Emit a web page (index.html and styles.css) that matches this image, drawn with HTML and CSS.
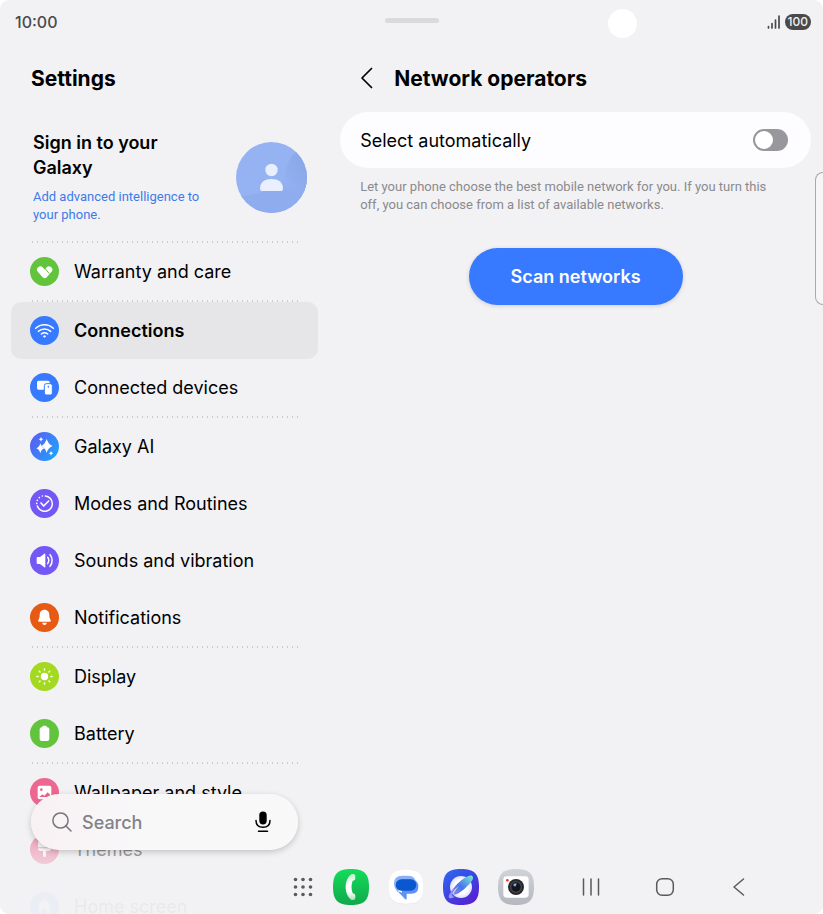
FILE: index.html
```html
<!DOCTYPE html>
<html lang="en">
<head>
    <meta charset="UTF-8">
    <meta name="viewport" content="width=device-width, initial-scale=1.0">
    <title>Settings - Network operators</title>
    <link rel="stylesheet" href="styles.css">
</head>
<body>

<div class="screen">

    <!-- Status bar -->
    <header class="status-bar">
        <span class="clock">10:00</span>
        <div class="status-icons">
            <svg class="signal" viewBox="0 0 14 14" aria-hidden="true">
                <path d="M1.5 11.5v1.500M5 8.500v4.500M8.500 5v8M12 1v12" stroke="#4a4a4c" stroke-width="1.700" stroke-linecap="round"/>
            </svg>
            <span class="battery-level">100</span>
        </div>
    </header>
    <div class="drag-handle"></div>
    <div class="camera-hole"></div>
    <div class="edge-panel"></div>

    <div class="panes">

        <!-- Left pane: settings list -->
        <nav class="sidebar">
            <h1 class="title">Settings</h1>

            <a class="account" href="#account">
                <span class="account-text">
                    <span class="account-title">Sign in to your Galaxy</span>
                    <span class="account-sub">Add advanced intelligence to your phone.</span>
                </span>
                <svg class="avatar" viewBox="0 0 71 71" aria-hidden="true">
                    <defs>
                        <clipPath id="avatarClip"><circle cx="35.5" cy="35.5" r="35.5"/></clipPath>
                        <linearGradient id="avatarShade" x1="0" y1="0" x2="0" y2="1">
                            <stop offset="0" stop-color="#95b2f2"/>
                            <stop offset="0.400" stop-color="#8eacee"/>
                            <stop offset="1" stop-color="#8eacee"/>
                        </linearGradient>
                        <linearGradient id="avatarEdge" x1="1" y1="0" x2="0" y2="1">
                            <stop offset="0" stop-color="#87a4e6"/>
                            <stop offset="1" stop-color="#95b2f2"/>
                        </linearGradient>
                    </defs>
                    <g clip-path="url(#avatarClip)">
                        <rect width="71" height="71" fill="#95b2f2"/>
                        <path d="M0 54Q28 54 48 38H71V71H0z" fill="url(#avatarShade)"/>
                        <path d="M48 38Q50 18 60 10L71 20V50z" fill="url(#avatarEdge)"/>
                    </g>
                    <circle cx="35.500" cy="28" r="6.200" fill="#e9effc"/>
                    <path d="M24 46.500C24 40 29 37 35.500 37S47 40 47 46.500Q47 49 45 49H26Q24 49 24 46.500z" fill="#e9effc"/>
                </svg>
            </a>

            <ul class="menu">
                <li class="group">
                    <a class="item" href="#warranty">
                        <svg class="icon" viewBox="0 0 87 87">
                            <circle cx="43.500" cy="43.500" r="43.500" fill="#62c33c"/>
                            <path d="M31 38L44 53L57 38" fill="none" stroke="#fff" stroke-width="20" stroke-linecap="round" stroke-linejoin="round"/>
                            <path d="M43 32L58 50" stroke="#62c33c" stroke-width="3"/>
                        </svg>
                        <span>Warranty and care</span>
                    </a>
                </li>
                <li class="group">
                    <a class="item active" href="#connections">
                        <svg class="icon" viewBox="0 0 87 87">
                            <circle cx="43.500" cy="43.500" r="43.500" fill="#387aff"/>
                            <path d="M17 37A38 38 0 0 1 70 37M25 46A28 28 0 0 1 62 46M34 54A15 15 0 0 1 53 54" fill="none" stroke="#fff" stroke-width="4.500" stroke-linecap="round"/>
                            <circle cx="43.500" cy="61" r="3.500" fill="#fff"/>
                        </svg>
                        <span>Connections</span>
                    </a>
                    <a class="item" href="#devices">
                        <svg class="icon" viewBox="0 0 87 87">
                            <circle cx="43.500" cy="43.500" r="43.500" fill="#387aff"/>
                            <rect x="21" y="23" width="38" height="27" rx="5" fill="#fff"/>
                            <rect x="43" y="32" width="24" height="34" rx="6" fill="#fff" stroke="#387aff" stroke-width="3"/>
                            <rect x="53" y="38" width="4" height="6" rx="2" fill="#387aff"/>
                        </svg>
                        <span>Connected devices</span>
                    </a>
                </li>
                <li class="group">
                    <a class="item" href="#galaxy-ai">
                        <svg class="icon" viewBox="0 0 87 87">
                            <defs>
                                <linearGradient id="aiFill" x1="0" y1="0.200" x2="1" y2="0.800">
                                    <stop offset="0" stop-color="#5c5cf5"/>
                                    <stop offset="1" stop-color="#1da4fb"/>
                                </linearGradient>
                            </defs>
                            <circle cx="43.500" cy="43.500" r="43.500" fill="url(#aiFill)"/>
                            <g fill="#fff">
                                <path d="M31 34Q34 46 43 49Q34 52 31 64Q28 52 19 49Q28 46 31 34z"/>
                                <path d="M50 21Q55 37 68 42Q55 47 50 62Q45 47 33 42Q45 37 50 21z"/>
                                <path d="M33 15Q34 21 40 22Q34 23 33 29Q32 23 26 22Q32 21 33 15z"/>
                                <path d="M63 57Q64 63 70 64Q64 65 63 71Q62 65 56 64Q62 63 63 57z"/>
                            </g>
                        </svg>
                        <span>Galaxy AI</span>
                    </a>
                    <a class="item" href="#modes">
                        <svg class="icon" viewBox="0 0 87 87">
                            <circle cx="43.500" cy="43.500" r="43.500" fill="#7358f5"/>
                            <g fill="none" stroke="#fff" stroke-width="4.500" stroke-linecap="round" stroke-linejoin="round">
                                <path d="M46 21A23 23 0 1 1 22 51"/>
                                <path d="M20 43v0.100M22 34v0.100M28 26v0.100M37 21v0.100" stroke-width="5"/>
                                <path d="M33 42L41 51L56 36" stroke-width="5"/>
                            </g>
                        </svg>
                        <span>Modes and Routines</span>
                    </a>
                    <a class="item" href="#sounds">
                        <svg class="icon" viewBox="0 0 87 87">
                            <circle cx="43.500" cy="43.500" r="43.500" fill="#7358f5"/>
                            <path d="M20 36Q20 33 23 33H30L43 23Q46 21 46 25V62Q46 66 43 64L30 54H23Q20 54 20 51z" fill="#fff"/>
                            <path d="M53 34Q60 43 53 53M60 26Q73 43 60 61" fill="none" stroke="#fff" stroke-width="4.500" stroke-linecap="round"/>
                        </svg>
                        <span>Sounds and vibration</span>
                    </a>
                    <a class="item" href="#notifications">
                        <svg class="icon" viewBox="0 0 87 87">
                            <circle cx="43.500" cy="43.500" r="43.500" fill="#e65a14"/>
                            <path d="M43.500 20C53 20 58 27 58 36C58 44 59 46 62 51Q64 56 60 56H27Q23 56 25 51C28 46 29 44 29 36C29 27 34 20 43.500 20zM36 59H51Q49 66 43.500 66T36 59z" fill="#fff"/>
                        </svg>
                        <span>Notifications</span>
                    </a>
                </li>
                <li class="group">
                    <a class="item" href="#display">
                        <svg class="icon" viewBox="0 0 87 87">
                            <circle cx="43.500" cy="43.500" r="43.500" fill="#a3d921"/>
                            <circle cx="43.500" cy="43.500" r="11" fill="#fff"/>
                            <path d="M43.500 21v3M43.500 63v3M21 43.500h3M63 43.500h3M28 28l2 2M57 57l2 2M28 59l2-2M57 30l2-2" stroke="#fff" stroke-width="4.500" stroke-linecap="round"/>
                        </svg>
                        <span>Display</span>
                    </a>
                    <a class="item" href="#battery">
                        <svg class="icon" viewBox="0 0 87 87">
                            <circle cx="43.500" cy="43.500" r="43.500" fill="#62c33c"/>
                            <rect x="37" y="20" width="13" height="10" rx="3" fill="#fff"/>
                            <rect x="29" y="25" width="29" height="41" rx="6" fill="#fff"/>
                        </svg>
                        <span>Battery</span>
                    </a>
                </li>
                <li class="group">
                    <a class="item" href="#wallpaper">
                        <svg class="icon" viewBox="0 0 87 87">
                            <circle cx="43.500" cy="43.500" r="43.500" fill="#ed6790"/>
                            <rect x="23" y="23" width="41" height="41" rx="6" fill="#fff"/>
                            <circle cx="34" cy="35" r="4" fill="#ed6790"/>
                            <path d="M28 57L37 49L43 53L53 43L60 50V57z" fill="#ed6790"/>
                        </svg>
                        <span>Wallpaper and style</span>
                    </a>
                    <a class="item" href="#themes">
                        <svg class="icon" viewBox="0 0 87 87">
                            <circle cx="43.500" cy="43.500" r="43.500" fill="#ed6790"/>
                            <path d="M24 20H63V37H24zM24 40H63Q63 48 55 48H48V62Q48 66 43.500 66T39 62V48H32Q24 48 24 40z" fill="#fff"/>
                        </svg>
                        <span>Themes</span>
                    </a>
                    <a class="item" href="#home-screen">
                        <svg class="icon" viewBox="0 0 87 87">
                            <circle cx="43.500" cy="43.500" r="43.500" fill="#387aff"/>
                            <path d="M43.500 20L66 42H60V64H49V51H38V64H27V42H21z" fill="#fff"/>
                        </svg>
                        <span>Home screen</span>
                    </a>
                </li>
            </ul>
        </nav>

        <!-- Right pane: network operators -->
        <main class="content">
            <div class="content-header">
                <button class="back-button" type="button" aria-label="Back">
                    <svg viewBox="0 0 14 22" aria-hidden="true">
                        <path d="M11.500 1.500L2 11L11.500 20.500" fill="none" stroke="#000" stroke-width="1.700" stroke-linecap="round" stroke-linejoin="round"/>
                    </svg>
                </button>
                <h2 class="title">Network operators</h2>
            </div>

            <div class="card">
                <label for="autoSelect">Select automatically</label>
                <input type="checkbox" id="autoSelect" class="switch" role="switch">
            </div>
            <p class="hint">Let your phone choose the best mobile network for you. If you turn this off, you can choose from a list of available networks.</p>

            <button class="scan-button" type="button">Scan networks</button>
        </main>
    </div>

    <div class="bottom-fade"></div>

    <!-- Floating search -->
    <form class="search" role="search">
        <svg class="search-icon" viewBox="0 0 20 20" aria-hidden="true">
            <path d="M14 14L19 19" stroke="#77777b" stroke-width="1.500" stroke-linecap="round"/>
            <circle cx="8.500" cy="8.500" r="7.600" fill="none" stroke="#77777b" stroke-width="1.500"/>
        </svg>
        <input type="search" class="search-input" placeholder="Search" aria-label="Search">
        <button class="mic-button" type="button" aria-label="Voice search">
            <svg viewBox="0 0 16 22" aria-hidden="true">
                <rect x="4.300" y="0.500" width="7.400" height="13" rx="3.700"/>
                <path d="M1 9.500C1 14 4 16.300 8 16.300S15 14 15 9.500M3.500 20.300h9" fill="none" stroke="#000" stroke-width="1.500" stroke-linecap="round"/>
            </svg>
        </button>
    </form>

    <!-- Taskbar -->
    <footer class="taskbar">
        <button class="nav-button" type="button" aria-label="All apps">
            <svg viewBox="0 0 20 20" fill="#5a5a5c">
                <circle cx="2.500" cy="2.500" r="1.800"/><circle cx="10" cy="2.500" r="1.800"/><circle cx="17.500" cy="2.500" r="1.800"/>
                <circle cx="2.500" cy="10" r="1.800"/><circle cx="10" cy="10" r="1.800"/><circle cx="17.500" cy="10" r="1.800"/>
                <circle cx="2.500" cy="17.500" r="1.800"/><circle cx="10" cy="17.500" r="1.800"/><circle cx="17.500" cy="17.500" r="1.800"/>
            </svg>
        </button>

        <div class="apps">
            <button class="app" type="button" aria-label="Phone">
                <svg viewBox="0 0 108 108">
                    <defs>
                        <linearGradient id="phoneBg" x1="0" y1="0" x2="0" y2="1">
                            <stop offset="0" stop-color="#14dc5a"/>
                            <stop offset="1" stop-color="#10a94c"/>
                        </linearGradient>
                        <linearGradient id="phoneFg" x1="0" y1="0" x2="0" y2="1">
                            <stop offset="0" stop-color="#b5f2c6"/>
                            <stop offset="0.350" stop-color="#fff"/>
                            <stop offset="0.700" stop-color="#fff"/>
                            <stop offset="1" stop-color="#a5e2b8"/>
                        </linearGradient>
                    </defs>
                    <path d="M54 0C94 0 108 14 108 54S94 108 54 108S0 94 0 54S14 0 54 0z" fill="url(#phoneBg)"/>
                    <path d="M56 15H62Q67 16 67 22V28Q67 35 59 35Q52 54 59 73Q67 74 67 80V87Q67 92 61 93H56C32 78 32 30 56 15z" fill="url(#phoneFg)"/>
                </svg>
            </button>
            <button class="app" type="button" aria-label="Messages">
                <svg viewBox="0 0 108 108">
                    <path d="M54 3C92 3 106 16 106 54S92 106 54 106S2 92 2 54S16 3 54 3z" fill="#e2e2e5"/>
                    <path d="M54 2C92 2 106 15 106 53S92 104 54 104S2 91 2 53S16 2 54 2z" fill="#fff"/>
                    <path d="M42 20H60Q79 20 83 36H40L30 70Q18 58 18 43Q18 20 42 20z" fill="#8ab0f8"/>
                    <path d="M42 31H70Q91 33 91 53Q91 74 70 74H56V88Q56 94 51 90L28 66Q38 71 42 70z" fill="#5f92f5"/>
                    <rect x="23" y="31" width="62" height="34" rx="17" fill="#0a57d0"/>
                </svg>
            </button>
            <button class="app" type="button" aria-label="Internet">
                <svg viewBox="0 0 108 108">
                    <defs>
                        <linearGradient id="webBg" x1="0" y1="0" x2="0.800" y2="1">
                            <stop offset="0" stop-color="#2f6af2"/>
                            <stop offset="0.500" stop-color="#3b46e4"/>
                            <stop offset="1" stop-color="#5a1fd2"/>
                        </linearGradient>
                        <linearGradient id="orbit" x1="0" y1="1" x2="1" y2="0">
                            <stop offset="0" stop-color="#b59af5"/>
                            <stop offset="0.500" stop-color="#4573ee"/>
                            <stop offset="1" stop-color="#78f0d0"/>
                        </linearGradient>
                        <radialGradient id="globe">
                            <stop offset="0.600" stop-color="#fff"/>
                            <stop offset="1" stop-color="#dcdffc"/>
                        </radialGradient>
                    </defs>
                    <path d="M54 0C94 0 108 14 108 54S94 108 54 108S0 94 0 54S14 0 54 0z" fill="url(#webBg)"/>
                    <circle cx="54" cy="54" r="33" fill="url(#globe)"/>
                    <path d="M24 88C6 88 30 58 45 43S88 10 90 26C91 35 72 53 59 64S34 79 32 77C28 75 40 59 50 49C36 60 25 74 29 81Q31 85 38 82Q30 88 24 88z" fill="url(#orbit)"/>
                </svg>
            </button>
            <button class="app" type="button" aria-label="Camera">
                <svg viewBox="0 0 108 108">
                    <defs>
                        <linearGradient id="camBg" x1="0" y1="0" x2="0" y2="1">
                            <stop offset="0" stop-color="#d0d3d8"/>
                            <stop offset="1" stop-color="#b5b8be"/>
                        </linearGradient>
                    </defs>
                    <path d="M54 0C94 0 108 14 108 54S94 108 54 108S0 94 0 54S14 0 54 0z" fill="url(#camBg)"/>
                    <rect x="16" y="22" width="76" height="64" rx="10" fill="#fff"/>
                    <circle cx="28" cy="34" r="4" fill="#e33b2e"/>
                    <circle cx="54" cy="54" r="24" fill="#26272b"/>
                    <circle cx="54" cy="54" r="18" fill="#44464c"/>
                    <circle cx="54" cy="54" r="14" fill="#15161c"/>
                    <path d="M44 49Q48 41 57 43L52 54z" fill="#4170b8"/>
                    <circle cx="51" cy="47" r="3" fill="#a9cbf5"/>
                </svg>
            </button>
        </div>

        <div class="nav-buttons">
            <button class="nav-button" type="button" aria-label="Recents">
                <svg viewBox="0 0 20 20"><path d="M2.500 2v16M10 2v16M17.500 2v16" stroke="#5a5a5c" stroke-width="1.500" stroke-linecap="round"/></svg>
            </button>
            <button class="nav-button" type="button" aria-label="Home">
                <svg viewBox="0 0 20 20"><rect x="1.700" y="1.700" width="16.600" height="16.600" rx="5.500" fill="none" stroke="#5a5a5c" stroke-width="1.500"/></svg>
            </button>
            <button class="nav-button" type="button" aria-label="Back">
                <svg viewBox="0 0 20 20"><path d="M14.500 2L5 10L14.500 18" fill="none" stroke="#5a5a5c" stroke-width="1.500" stroke-linecap="round" stroke-linejoin="round"/></svg>
            </button>
        </div>
    </footer>
</div>

</body>
</html>
```
FILE: styles.css
```css
* {
    box-sizing: border-box;
}

body {
    margin: 0;
    background-color: #fff;
    color: #000;
    font-family: Inter, Roboto, sans-serif;
    font-size: 18px;
}

button {
    border: none;
    padding: 0;
    background: none;
    font-family: inherit;
    cursor: pointer;
}

svg {
    display: block;
}

.screen {
    position: relative;
    display: flex;
    flex-direction: column;
    height: 100vh;
    overflow: hidden;
    background-color: #f2f2f4;
    border-radius: 9px;
}

/* Status bar */
.status-bar {
    display: flex;
    justify-content: space-between;
    align-items: center;
    flex: none;
    height: 44px;
    padding: 0 12px 0 15px;
    color: #4a4a4c;
}

.clock {
    font-size: 16px;
    font-weight: 500;
}

.status-icons {
    display: flex;
    align-items: center;
    gap: 4px;
}

.signal {
    width: 14px;
    height: 14px;
}

.battery-level {
    padding: 0 3px;
    border-radius: 8px;
    background-color: #4a4a4c;
    color: #f2f2f4;
    font-size: 12px;
    font-weight: 500;
    line-height: 16px;
}

.drag-handle {
    position: absolute;
    top: 18px;
    left: 50%;
    width: 54px;
    height: 5px;
    margin-left: -27px;
    border-radius: 3px;
    background-color: #dadadc;
}

.camera-hole {
    position: absolute;
    top: 9px;
    right: 186px;
    width: 29px;
    height: 29px;
    border-radius: 50%;
    background-color: #fff;
}

.edge-panel {
    position: absolute;
    top: 172px;
    right: 0;
    width: 8px;
    height: 133px;
    border: 1px solid #a9a9ab;
    border-right: none;
    border-radius: 8px 0 0 8px;
    background-color: #f6f6f8;
}

.panes {
    display: grid;
    grid-template-columns: 2fr 3fr;
    flex: 1;
    min-height: 0;
}

.title {
    margin: 0;
    padding-top: 2px;
    font-size: 21px;
    font-weight: 700;
    line-height: 66px;
}

/* Left pane */
.sidebar {
    overflow: hidden;
    padding: 0 11px;
}

.sidebar .title {
    padding-left: 20px;
}

.account {
    display: flex;
    justify-content: space-between;
    align-items: center;
    padding: 18px 11px 17px 22px;
    color: #000;
    text-decoration: none;
}

.account-text {
    width: 180px;
}

.account-title,
.account-sub {
    display: block;
}

.account-title {
    width: 140px;
    margin-bottom: 8px;
    font-weight: 600;
    line-height: 25px;
}

.account-sub {
    color: #3d7bea;
    font-family: Roboto, sans-serif;
    font-size: 13px;
    line-height: 18px;
}

.avatar {
    width: 71px;
    height: 71px;
}

.menu {
    margin: 0;
    padding: 0;
    list-style: none;
}

/* Dotted line above each group */
.group::before {
    content: "";
    display: block;
    height: 2px;
    margin: 0 19px;
    background: radial-gradient(circle, #cbcbce 1px, transparent 1px) 0 0 / 5px 2px repeat-x;
}

.item {
    display: flex;
    align-items: center;
    gap: 15px;
    height: 57px;
    padding: 0 19px;
    border-radius: 10px;
    color: #000;
    text-decoration: none;
    white-space: nowrap;
}

.item.active {
    background-color: #e6e6e8;
    font-weight: 600;
}

.icon {
    flex: none;
    width: 29px;
    height: 29px;
}

/* Right pane */
.content {
    padding: 0 12px 0 11px;
}

.content-header {
    display: flex;
    align-items: center;
    gap: 20px;
    padding-left: 20px;
}

.back-button {
    width: 14px;
    height: 22px;
}

.card {
    display: flex;
    align-items: center;
    justify-content: space-between;
    height: 56px;
    padding: 0 23px 0 20px;
    border-radius: 28px;
    background-color: #fdfdff;
}

.switch {
    appearance: none;
    width: 35px;
    height: 22px;
    margin: 0;
    padding: 2px;
    border-radius: 11px;
    background-color: #98979c;
    cursor: pointer;
}

.switch::before {
    content: "";
    display: block;
    width: 18px;
    height: 18px;
    border-radius: 50%;
    background-color: #fff;
}

.switch:checked {
    background-color: #387aff;
}

.switch:checked::before {
    margin-left: auto;
}

.hint {
    margin: 10px 28px 34px 20px;
    color: #8a8a8d;
    font-family: Roboto, sans-serif;
    font-size: 13px;
    line-height: 18px;
}

.scan-button {
    display: block;
    width: 214px;
    height: 57px;
    margin: 0 auto;
    border-radius: 29px;
    background-color: #387aff;
    box-shadow: 0 1px 4px rgba(0, 0, 0, 0.15);
    color: #fff;
    font-size: 18px;
    font-weight: 600;
}

/* List fades out behind the taskbar */
.bottom-fade {
    position: absolute;
    right: 0;
    bottom: 0;
    left: 0;
    height: 114px;
    background: linear-gradient(rgba(242, 242, 244, 0), rgba(242, 242, 244, 0.6) 45%, rgba(242, 242, 244, 0.96) 80%);
}

.search {
    position: absolute;
    bottom: 64px;
    left: 31px;
    display: flex;
    align-items: center;
    gap: 10px;
    width: 267px;
    height: 56px;
    padding: 0 27px 0 21px;
    border-radius: 28px;
    background: linear-gradient(90deg, #f8f1f4, #f8f8f9 40%);
    box-shadow: 0 2px 6px rgba(0, 0, 0, 0.2);
}

.search-icon {
    flex: none;
    width: 20px;
    height: 20px;
}

.search-input {
    flex: 1;
    min-width: 0;
    padding: 0;
    border: none;
    outline: none;
    background: none;
    font-family: inherit;
    font-size: 18px;
    font-weight: 500;
}

.search-input::placeholder {
    color: #828286;
}

.mic-button {
    width: 16px;
    height: 22px;
}

/* Taskbar */
.taskbar {
    position: absolute;
    right: 0;
    bottom: 9px;
    left: 0;
    display: flex;
    align-items: center;
    padding-left: 293px;
}

.nav-button {
    width: 20px;
    height: 20px;
}

.apps {
    display: flex;
    gap: 19px;
    margin: 0 47px 0 20px;
}

.app,
.app svg {
    width: 36px;
    height: 36px;
}

.nav-buttons {
    display: flex;
    gap: 54px;
}
```
